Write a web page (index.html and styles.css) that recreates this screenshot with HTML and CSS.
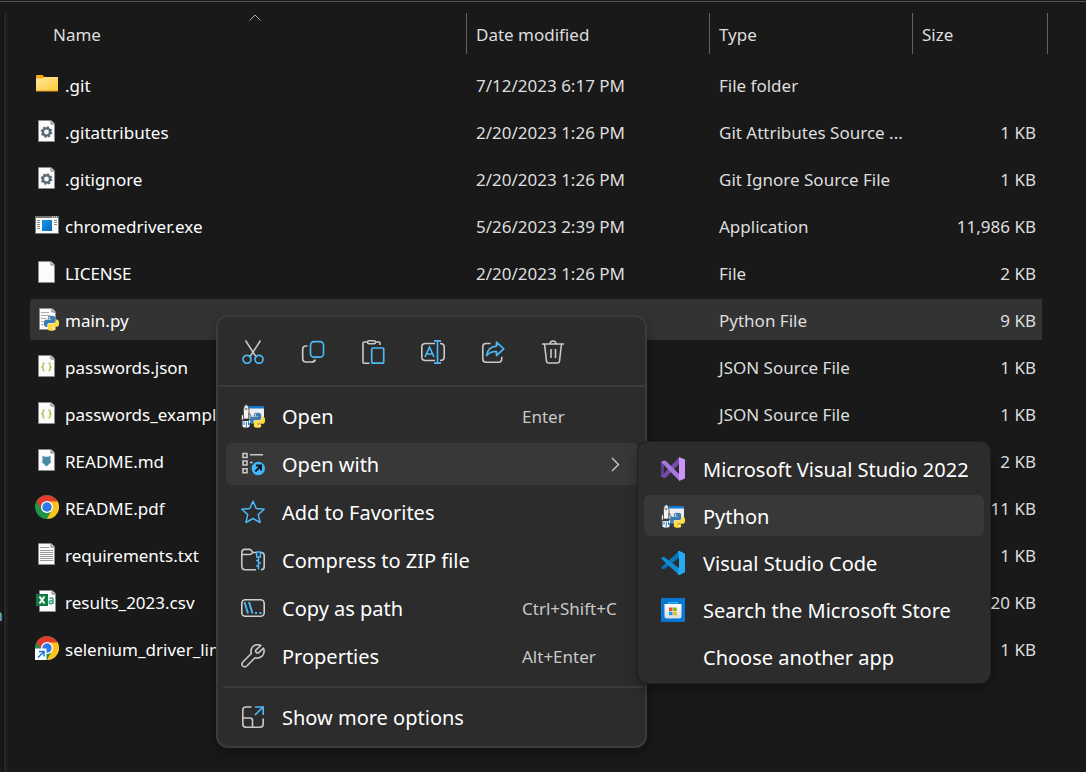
FILE: index.html
```html
<!DOCTYPE html>
<html lang="en">
<head>
<meta charset="utf-8">
<title>File list</title>
<link rel="stylesheet" href="styles.css">
</head>
<body>
<svg class="sprite" aria-hidden="true">
  <defs>
    <linearGradient id="gFolder" x1="0" y1="0" x2="1" y2="1"><stop offset="0" stop-color="#ffe7a2"/><stop offset="1" stop-color="#ffc937"/></linearGradient>
    <linearGradient id="gApp" x1="0" y1="0" x2="1" y2="1"><stop offset="0" stop-color="#1a97e6"/><stop offset="1" stop-color="#0467bd"/></linearGradient>
    <linearGradient id="gBag" x1="0" y1="0" x2="0" y2="1"><stop offset="0" stop-color="#fff"/><stop offset="1" stop-color="#d8dde2"/></linearGradient>
  </defs>
  <symbol id="page" viewBox="0 0 24 24">
    <path d="M3.5 1.5h12.5l3.500 3.500v17.500h-16z" fill="#fbfbfb" stroke="#8b8b8b"/>
    <path d="M16 1.500v3.500h3.500" fill="#e4e4e4" stroke="#777"/>
  </symbol>
  <symbol id="folder" viewBox="0 0 24 24">
    <path d="M1 5.500V4q0-1 1-1h5.500l2 2H22q1 0 1 1V7H1z" fill="#f9a813"/>
    <path d="M1 6.500h7L10 5h13v14H1z" fill="url(#gFolder)"/>
    <path d="M1 18.500h22v1H1z" fill="#dfa01b"/>
  </symbol>
  <symbol id="settings-file" viewBox="0 0 24 24">
    <use href="#page"/>
    <circle cx="11.500" cy="13" r="3.600" fill="none" stroke="#5a6b75" stroke-width="2.400"/>
    <circle cx="11.500" cy="13" r="5" fill="none" stroke="#5a6b75" stroke-width="1.600" stroke-dasharray="2 1.930"/>
  </symbol>
  <symbol id="exe" viewBox="0 0 24 24">
    <path d="M.5 3.500h23v17H.5z" fill="#fafafa" stroke="#777"/>
    <path d="M0 3h24v2H0z" fill="#77736f"/>
    <path d="M17 4h1m1 0h1m1 0h1" stroke="#fff"/>
    <path d="M7 7h10v11H7z" fill="url(#gApp)"/>
    <path d="M2 7.500h3M2 9.500h3M2 11.500h3M2 13.500h3M2 15.500h3M19 7.500h3M19 9.500h3M19 11.500h3" stroke="#888"/>
  </symbol>
  <symbol id="python" viewBox="0 0 24 24">
    <path fill="#3c7cb5" d="M14.250.180l.9.200.730.260.590.300.450.320.340.340.250.340.160.330.100.300.040.260.020.200-.010.130V8.500l-.050.630-.130.550-.210.460-.260.380-.300.310-.330.250-.350.190-.350.140-.330.100-.300.070-.260.040-.210.020H8.770l-.690.050-.590.140-.500.220-.410.270-.330.320-.270.350-.200.360-.150.370-.100.350-.070.320-.040.270-.020.210v3.060H3.170l-.210-.030-.280-.070-.320-.120-.350-.180-.360-.260-.360-.360-.350-.460-.320-.590-.280-.730-.210-.880-.140-1.050-.050-1.230.060-1.220.160-1.040.240-.870.320-.710.360-.570.400-.440.420-.330.420-.240.400-.160.360-.100.320-.050.240-.010h.160l.060.010h8.160v-.830H6.180l-.010-2.750-.020-.370.050-.340.110-.310.170-.280.250-.260.310-.230.380-.200.440-.180.510-.150.580-.120.640-.100.710-.060.770-.040.840-.020 1.270.050z"/>
    <path fill="#ffdc45" d="M21.040 6.110l.280.060.320.120.350.180.360.270.360.350.350.470.320.590.280.730.210.880.140 1.040.050 1.230-.060 1.230-.160 1.040-.240.860-.320.710-.360.570-.400.450-.420.330-.420.240-.400.160-.360.090-.320.050-.240.020-.160-.010h-8.220v.820h5.840l.010 2.760.020.360-.050.340-.110.310-.170.290-.250.250-.310.240-.380.200-.440.170-.510.150-.580.130-.640.090-.710.070-.770.040-.840.010-1.270-.040-1.070-.140-.900-.200-.730-.250-.590-.300-.450-.330-.340-.340-.250-.340-.160-.330-.100-.300-.040-.250-.020-.200.010-.130v-5.340l.050-.640.130-.540.210-.460.260-.380.300-.320.330-.240.350-.200.350-.140.330-.100.300-.060.260-.040.210-.020.130-.010h5.840l.690-.050.590-.140.500-.210.410-.280.330-.320.270-.350.200-.360.150-.360.100-.350.070-.320.040-.280.020-.210V6.070h2.090z"/>
    <circle cx="8.700" cy="3.300" r="1.300" fill="#fff"/><circle cx="15.300" cy="20.700" r="1.300" fill="#fff"/>
  </symbol>
  <symbol id="py-file" viewBox="0 0 24 24">
    <use href="#page" x="1"/>
    <path d="M6 5.500h8M6 8.500h9M6 11.500h5M6 14.500h4M6 17.500h3" stroke="#aaa"/>
    <use href="#python" x="9" y="8.500" width="15" height="15.500"/>
  </symbol>
  <symbol id="json-file" viewBox="0 0 24 24">
    <use href="#page"/>
    <path d="M9.500 9q-1.500 0-1.500 1.500v1.500l-1 1 1 1v1.500q0 1.500 1.500 1.500M13.500 9q1.500 0 1.500 1.500v1.500l1 1-1 1v1.500q0 1.500-1.500 1.500" fill="none" stroke="#b7b73b" stroke-width="1.300"/>
  </symbol>
  <symbol id="md-file" viewBox="0 0 24 24">
    <use href="#page"/>
    <path d="M7.500 7.500l2 1.200h4l2-1.200v6h1.200L11.500 18.500 6.300 13.500h1.200z" fill="#4889a8"/>
  </symbol>
  <symbol id="txt-file" viewBox="0 0 24 24">
    <use href="#page"/>
    <path d="M5 5.500h9.500M5 8.500h13M5 10.500h13M5 12.500h13M5 14.500h13M5 16.500h13M5 18.500h13" stroke="#999"/>
  </symbol>
  <symbol id="csv-file" viewBox="0 0 24 24">
    <use href="#page" x="1"/>
    <path d="M1 5h12v12H1z" fill="#107c41"/>
    <path d="M4.500 7.500l5 7m0-7l-5 7" stroke="#fff" stroke-width="1.900"/>
    <path d="M14.500 9.500q3.500-1.500 3.500 1.200v4.300m0-3.200q-3.800-.4-3.800 1.500t2.300 1.200l1.500-1.200" fill="none" stroke="#33a878" stroke-width="1.500"/>
  </symbol>
  <symbol id="chrome" viewBox="0 0 24 24">
    <circle cx="12" cy="12" r="12" fill="#229447"/>
    <path d="M22.400 6A12 12 0 0 1 12 24l4.800-9.200L12 6z" fill="#fcc31e"/>
    <path d="M1.600 6A12 12 0 0 1 22.400 6.500H12l-4.800 8.300z" fill="#e03b2e"/>
    <circle cx="12" cy="12" r="6" fill="#fff"/><circle cx="12" cy="12" r="4.700" fill="#2f78ea"/>
  </symbol>
  <symbol id="chrome-link" viewBox="0 0 24 24">
    <use href="#chrome"/>
    <path d="M0 12.500h11.500V24H0z" fill="#fff"/>
    <path d="M3 21.500l5.500-5.500M4 15.500h5v5" fill="none" stroke="#1279ce" stroke-width="1.500"/>
  </symbol>
  <symbol id="cut" viewBox="0 0 24 24">
    <path d="M4.500.500l11 17M19.500.500l-11 17" stroke="#c9c9c9" stroke-width="1.500"/>
    <g fill="none" stroke="#4cb8f5" stroke-width="1.700"><circle cx="6" cy="19.300" r="4"/><circle cx="18" cy="19.300" r="4"/></g>
  </symbol>
  <symbol id="copy" viewBox="0 0 24 24">
    <path d="M6.500 6H5Q1.700 6 1.700 9.500v9q0 3.500 3.500 3.500h5.500q3 0 3.500-2.500" fill="none" stroke="#c9c9c9" stroke-width="1.700"/>
    <rect x="9.500" y="1.700" width="13" height="15.500" rx="3.500" fill="none" stroke="#4cb8f5" stroke-width="1.700"/>
  </symbol>
  <symbol id="paste" viewBox="0 0 24 24">
    <path d="M8.500 23.200H3q-1 0-1-1V3q0-1 1-1h3m9 0h3q1 0 1 1v2" fill="none" stroke="#c9c9c9" stroke-width="1.600"/>
    <rect x="6.500" y=".8" width="8" height="3" rx="1.500" fill="none" stroke="#c9c9c9" stroke-width="1.500"/>
    <rect x="10.700" y="8" width="12" height="15.200" rx="1" fill="none" stroke="#4cb8f5" stroke-width="1.700"/>
  </symbol>
  <symbol id="rename" viewBox="0 0 24 24">
    <path d="M14 20.500H4.500Q.8 20.500.8 17V7q0-3.500 3.700-3.500H14m5 0q4.200 0 4.200 3.500v10q0 3.500-4.200 3.500" fill="none" stroke="#c9c9c9" stroke-width="1.600"/>
    <path d="M4 17L8.500 7 13 17M5.500 14h6M16.500 1v22M13 .8h7M13 23.200h7" fill="none" stroke="#4cb8f5" stroke-width="1.700"/>
  </symbol>
  <symbol id="share" viewBox="0 0 24 24">
    <path d="M9.500 3.500H5q-3.200 0-3.200 3.200V19q0 3.200 3.200 3.200h12.500q3.200 0 3.200-3.500v-2" fill="none" stroke="#c9c9c9" stroke-width="1.600"/>
    <path d="M15.500 2.200l7.300 6.600-7.300 6.700v-4q-6-.3-9.800 4 .8-8.500 9.800-9.300z" fill="none" stroke="#4cb8f5" stroke-width="1.700" stroke-linejoin="round"/>
  </symbol>
  <symbol id="trash" viewBox="0 0 24 24">
    <path d="M1 4h22M3.500 4l2 17q.2 2 2 2h9q1.800 0 2-2l2-17M9 4q0-3 3-3t3 3M10 9v9m4.500-9v9" fill="none" stroke="#c9c9c9" stroke-width="1.600"/>
  </symbol>
  <symbol id="rocket-py" viewBox="0 0 24 24">
    <path d="M8 2h15v17H8z" fill="#eeeeee"/><path d="M7 2h16v2.500H7z" fill="#1179ce"/>
    <path d="M2.500 15V6q0-4 2.700-5.500Q8 2 8 6v9z" fill="#f4f4f4" stroke="#444" stroke-width=".8"/>
    <path d="M2.500 9L.5 12v5l2-2zM8 9l2 3v5l-2-2z" fill="#f4f4f4" stroke="#444" stroke-width=".8"/>
    <circle cx="5.300" cy="5" r="1.200" fill="#888"/>
    <path d="M1.500 17h7v5.500l-1.500 1H3l-1.500-1z" fill="#fff"/><path d="M3 17.500v3.500m2.300-3.500v5.500M7.500 17.500v3.500" stroke="#1179ce"/>
    <use href="#python" x="9" y="8.500" width="15" height="15.500"/>
  </symbol>
  <symbol id="open-with" viewBox="0 0 24 24">
    <path d="M2 1.500h4v4H2zM2 9h4v4H2zM2 16.700h4v4H2zM9 2.700h13M9 10.500h2.500" fill="none" stroke="#c9c9c9" stroke-width="1.600"/>
    <circle cx="17.300" cy="16.500" r="6.700" fill="#3fb9fb"/>
    <path d="M14.300 19.500l5.500-5.500M15 13.500h5v5" fill="none" stroke="#101010" stroke-width="1.800"/>
  </symbol>
  <symbol id="star" viewBox="0 0 24 24">
    <path d="M12 1.200l3.200 7.300 8 .8-6 5.300 1.900 7.900-7.100-4-7.100 4 1.900-7.900-6-5.300 8-.8z" fill="none" stroke="#4cb8f5" stroke-width="1.500" stroke-linejoin="round"/>
  </symbol>
  <symbol id="zip" viewBox="0 0 24 24">
    <path d="M15 4.500h-3L10 2q-.7-.6-1.500-.6H4Q.8 1.400.8 4.500V18q0 3.700 3.500 3.700H15M.8 6.500H9q1 0 3-2M20 4.500q3.200 0 3.200 3v11q0 3.200-3.200 3.200" fill="none" stroke="#c9c9c9" stroke-width="1.600"/>
    <path d="M15 4h5M15.700 4v5h3.700V4M17.500 9v12.500M15 12.500h2.500M17.500 15H20M15 18h2.500" fill="none" stroke="#4cb8f5" stroke-width="1.500"/>
  </symbol>
  <symbol id="path" viewBox="0 0 24 24">
    <rect x=".8" y="3.800" width="22.400" height="16.400" rx="3.500" fill="none" stroke="#d0d0d0" stroke-width="1.600"/>
    <path d="M3.500 6l3.500 11.500M8 6l3.500 11.500M14 17h2M18.500 17h2" stroke="#4cb8f5" stroke-width="1.900"/>
  </symbol>
  <symbol id="wrench" viewBox="0 0 24 24">
    <path d="M20 1.500q-5-2-8.300 1.300-2.500 2.800-1.400 6.700L1.700 18.200q-1.500 2 0 3.800 2 1.800 4.100 0l8.200-8.300q4 1.300 7-1.500 3.300-3.500 1.500-8l-4.700 4.500q-1.500.8-2.600-.3t-.2-2.500z" fill="none" stroke="#c9c9c9" stroke-width="1.600" stroke-linejoin="round"/>
  </symbol>
  <symbol id="more" viewBox="0 0 24 24">
    <path d="M10.500 2H5Q1.800 2 1.800 5.200V19q0 3.200 3.200 3.200h14q3.200 0 3.200-3.200v-5.500M1.800 13H9q2.500 0 2.500 2.500V22" fill="none" stroke="#c9c9c9" stroke-width="1.600"/>
    <path d="M14 2h8.200v8M22 2l-8 8" fill="none" stroke="#4cb8f5" stroke-width="1.700"/>
  </symbol>
  <symbol id="vs" viewBox="0 0 24 24">
    <path d="M0 5l3-1.500V21L0 19.500z" fill="#5d3e91"/>
    <path d="M5 20.500q-1 .8-2 .5l-3-1.500L18 .3V7z" fill="#744ba6"/>
    <path d="M0 5l3-1.500q1-.3 2 .5L18 17v6.500z" fill="#a577df"/>
    <path d="M18 0l6 2.500v19L18 24z" fill="#c995fa"/>
  </symbol>
  <symbol id="code" viewBox="0 0 24 24">
    <path d="M0 16.500l1.800 1.600q.7.500 1.400 0L18 7V0z" fill="#0873b9"/>
    <path d="M0 7.500l1.800-1.600q.7-.5 1.400 0L18 17v7z" fill="#0f8bd3"/>
    <path d="M17 0l1.500.1L24 2.700v18.600L18.500 24 17 23.500l1-6.500V7z" fill="#27aaf2"/>
  </symbol>
  <symbol id="store" viewBox="0 0 24 24">
    <path d="M0 0h24v24H0z" fill="#0877d4"/>
    <path d="M7.700 7V4.700h8.600V7" fill="none" stroke="#35baf3" stroke-width="1.300"/>
    <path d="M3.500 6h17v12q0 2.500-2.500 2.500H6q-2.500 0-2.500-2.500z" fill="url(#gBag)"/>
    <path d="M8 9.500h3.500V13H8z" fill="#ee5223"/><path d="M12.200 9.500h3.500V13h-3.500z" fill="#7ab907"/>
    <path d="M8 13.700h3.500v3.500H8z" fill="#11a0ed"/><path d="M12.200 13.700h3.500v3.500h-3.500z" fill="#f9b50c"/>
  </symbol>
</svg>

<div class="window">
  <aside class="nav"><span>n</span></aside>
  <div class="splitter"></div>
  <main class="content">
    <table class="files">
      <colgroup><col><col class="c-date"><col class="c-type"><col class="c-size"></colgroup>
      <thead>
        <tr>
          <th><div class="head head-name">Name<svg class="sort" viewBox="0 0 12 7"><path d="M.5 6.500L6 1l5.500 5.500" fill="none" stroke="#aaa"/></svg></div></th>
          <th><div class="head">Date modified</div></th>
          <th><div class="head">Type</div></th>
          <th><div class="head head-size">Size</div></th>
        </tr>
      </thead>
      <tbody>
        <tr><td><div class="name"><svg class="icon"><use href="#folder"/></svg>.git</div></td><td>7/12/2023 6:17 PM</td><td>File folder</td><td></td></tr>
        <tr><td><div class="name"><svg class="icon"><use href="#settings-file"/></svg>.gitattributes</div></td><td>2/20/2023 1:26 PM</td><td>Git Attributes Source ...</td><td>1 KB</td></tr>
        <tr><td><div class="name"><svg class="icon"><use href="#settings-file"/></svg>.gitignore</div></td><td>2/20/2023 1:26 PM</td><td>Git Ignore Source File</td><td>1 KB</td></tr>
        <tr><td><div class="name"><svg class="icon"><use href="#exe"/></svg>chromedriver.exe</div></td><td>5/26/2023 2:39 PM</td><td>Application</td><td>11,986 KB</td></tr>
        <tr><td><div class="name"><svg class="icon"><use href="#page"/></svg>LICENSE</div></td><td>2/20/2023 1:26 PM</td><td>File</td><td>2 KB</td></tr>
        <tr class="selected"><td><div class="name"><svg class="icon"><use href="#py-file"/></svg>main.py</div></td><td>7/12/2023 7:12 PM</td><td>Python File</td><td>9 KB</td></tr>
        <tr><td><div class="name"><svg class="icon"><use href="#json-file"/></svg>passwords.json</div></td><td></td><td>JSON Source File</td><td>1 KB</td></tr>
        <tr><td><div class="name"><svg class="icon"><use href="#json-file"/></svg>passwords_example</div></td><td></td><td>JSON Source File</td><td>1 KB</td></tr>
        <tr><td><div class="name"><svg class="icon"><use href="#md-file"/></svg>README.md</div></td><td></td><td></td><td>2 KB</td></tr>
        <tr><td><div class="name"><svg class="icon"><use href="#chrome"/></svg>README.pdf</div></td><td></td><td></td><td>11 KB</td></tr>
        <tr><td><div class="name"><svg class="icon"><use href="#txt-file"/></svg>requirements.txt</div></td><td></td><td></td><td>1 KB</td></tr>
        <tr><td><div class="name"><svg class="icon"><use href="#csv-file"/></svg>results_2023.csv</div></td><td></td><td></td><td>20 KB</td></tr>
        <tr><td><div class="name"><svg class="icon"><use href="#chrome-link"/></svg>selenium_driver_link</div></td><td></td><td></td><td>1 KB</td></tr>
      </tbody>
    </table>
  </main>
</div>

<div class="menu context" role="menu">
  <div class="actions">
    <button aria-label="Cut"><svg class="icon"><use href="#cut"/></svg></button>
    <button aria-label="Copy"><svg class="icon"><use href="#copy"/></svg></button>
    <button aria-label="Paste"><svg class="icon"><use href="#paste"/></svg></button>
    <button aria-label="Rename"><svg class="icon"><use href="#rename"/></svg></button>
    <button aria-label="Share"><svg class="icon"><use href="#share"/></svg></button>
    <button aria-label="Delete"><svg class="icon"><use href="#trash"/></svg></button>
  </div>
  <div class="items">
    <button class="item"><svg class="icon"><use href="#rocket-py"/></svg><span>Open</span><kbd>Enter</kbd></button>
    <button class="item active"><svg class="icon"><use href="#open-with"/></svg><span>Open with</span><svg class="chevron" viewBox="0 0 9 15"><path d="M1 1l6.500 6.500L1 14" fill="none" stroke="#ccc" stroke-width="1.400"/></svg></button>
    <button class="item"><svg class="icon"><use href="#star"/></svg><span>Add to Favorites</span></button>
    <button class="item"><svg class="icon"><use href="#zip"/></svg><span>Compress to ZIP file</span></button>
    <button class="item"><svg class="icon"><use href="#path"/></svg><span>Copy as path</span><kbd>Ctrl+Shift+C</kbd></button>
    <button class="item"><svg class="icon"><use href="#wrench"/></svg><span>Properties</span><kbd>Alt+Enter</kbd></button>
  </div>
  <div class="rule"></div>
  <div class="items">
    <button class="item"><svg class="icon"><use href="#more"/></svg><span>Show more options</span></button>
  </div>
</div>

<div class="menu submenu" role="menu">
  <button class="item"><svg class="icon"><use href="#vs"/></svg><span>Microsoft Visual Studio 2022</span></button>
  <button class="item active"><svg class="icon"><use href="#rocket-py"/></svg><span>Python</span></button>
  <button class="item"><svg class="icon"><use href="#code"/></svg><span>Visual Studio Code</span></button>
  <button class="item"><svg class="icon"><use href="#store"/></svg><span>Search the Microsoft Store</span></button>
  <button class="item"><span class="icon"></span><span>Choose another app</span></button>
</div>
</body>
</html>
```

FILE: styles.css
```css
* {
  box-sizing: border-box;
}

body {
  margin: 0;
  min-height: 100vh;
  overflow: hidden;
  background: #191919;
  color: #f5f5f5;
  font: 17px/24px "Noto Sans", "Open Sans", sans-serif;
}

.sprite {
  position: absolute;
  width: 0;
  height: 0;
}

.icon {
  display: block;
  flex: none;
  width: 24px;
  height: 24px;
}

.window {
  display: flex;
  min-height: 100vh;
  padding-top: 6px;
  background: linear-gradient(#555, #555) 0 1px / 100% 1px no-repeat;
}

.nav {
  display: flex;
  justify-content: flex-end;
  width: 3px;
  padding-top: 597px;
  overflow: hidden;
  color: #6ab4ea;
}

.splitter {
  width: 5px;
  margin-top: 7px;
  background: #282828;
  border-left: 1px solid #101010;
  border-right: 2px solid #1e1e1e;
}

.content {
  flex: 1;
  padding: 1px 38px 0 22px;
}

.files {
  width: 100%;
  table-layout: fixed;
  border-collapse: separate;
  border-spacing: 0 6px;
}

.c-date {
  width: 243px;
}

.c-type {
  width: 203px;
}

.c-size {
  width: 136px;
}

th {
  padding: 0 0 4px;
  font-weight: 400;
  text-align: left;
  color: #dedede;
}

.head {
  display: flex;
  align-items: center;
  height: 41px;
  padding: 2px 9px 0;
  border-left: 1px solid #636363;
}

.head-name {
  position: relative;
  margin-left: 14px;
  border-left: 0;
}

.head-size {
  border-right: 1px solid #636363;
}

.sort {
  position: absolute;
  top: 1px;
  left: calc(50% - 6px);
  width: 12px;
  height: 7px;
}

td {
  height: 41px;
  padding: 2px 0 0 10px;
  color: #dedede;
  white-space: nowrap;
}

td:first-child {
  padding: 2px 0 0 5px;
  color: #fff;
}

td:last-child {
  padding-right: 6px;
  border-right: 6px solid transparent;
  background-clip: padding-box;
  text-align: right;
}

.name {
  display: flex;
  align-items: center;
  gap: 6px;
  line-height: 28px;
}

.name .icon {
  margin-bottom: 4px;
}

.selected td {
  background-color: #333;
}

.selected td:first-child {
  border-radius: 2px 0 0 2px;
}

.menu {
  position: absolute;
  background: #2c2c2c;
  font-size: 20px;
  line-height: 28px;
}

.context {
  top: 315px;
  left: 216px;
  width: 431px;
  border: 2px solid #3b3b3b;
  border-radius: 12px;
  box-shadow: 0 6px 14px rgba(0, 0, 0, 0.3);
}

.submenu {
  top: 442px;
  left: 638px;
  display: grid;
  gap: 6px;
  width: 352px;
  padding: 6px;
  border-radius: 10px;
  box-shadow: 0 0 0 1px #212121, 0 6px 14px rgba(0, 0, 0, 0.35);
}

button {
  padding: 0;
  border: 0;
  background: none;
  color: #fff;
  font: inherit;
  text-align: left;
}

.actions {
  display: flex;
  height: 70px;
  padding: 2px 0 0 5px;
  border-bottom: 2px solid #3b3b3b;
}

.actions button {
  display: flex;
  align-items: center;
  justify-content: center;
  width: 60px;
}

.items {
  display: grid;
  gap: 6px;
  padding: 8px 6px 9px 8px;
}

.items + .rule + .items {
  padding-bottom: 8px;
}

.rule {
  height: 2px;
  margin: 0 2px 0 5px;
  background: #3b3b3b;
}

.item {
  display: flex;
  align-items: center;
  gap: 18px;
  height: 41px;
  padding: 0 15px 0 17px;
  border-radius: 6px;
  white-space: nowrap;
}

.item span,
.item kbd {
  padding-top: 2px;
}

.context .item {
  display: grid;
  grid-template-columns: 24px 223px 1fr;
  gap: 17px;
  height: 42px;
  padding: 0 19px 0 15px;
}

.active {
  background: #383838;
}

.chevron {
  justify-self: end;
  width: 9px;
  height: 15px;
}

kbd {
  color: #c8c8c8;
  font: inherit;
  font-size: 17px;
}
```
